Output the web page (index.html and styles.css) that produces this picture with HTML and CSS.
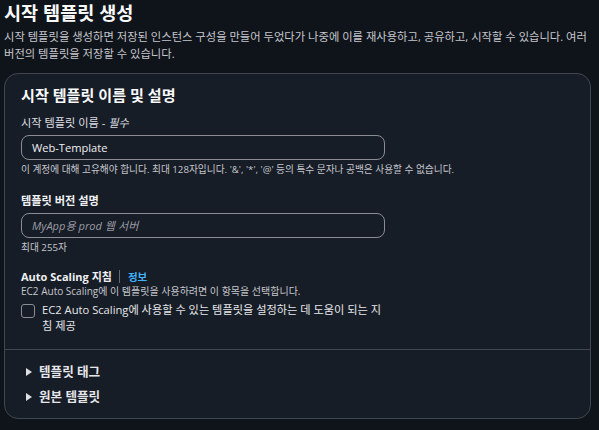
FILE: index.html
```html
<!DOCTYPE html>
<html lang="ko">
<head>
<meta charset="utf-8">
<link rel="stylesheet" href="styles.css">
</head>
<body>
<div class="page">
  <h1 class="title">시작 템플릿 생성</h1>
  <p class="desc">시작 템플릿을 생성하면 저장된 인스턴스 구성을 만들어 두었다가 나중에 이를 재사용하고, 공유하고, 시작할 수 있습니다. 여러 버전의 템플릿을 저장할 수 있습니다.</p>
  <div class="card">
    <div class="card-body">
      <h2 class="card-title">시작 템플릿 이름 및 설명</h2>
      <div class="field">
        <div class="label">시작 템플릿 이름 - <i>필수</i></div>
        <div class="input">Web-Template</div>
        <div class="hint">이 계정에 대해 고유해야 합니다. 최대 128자입니다. '&amp;', '*', '@' 등의 특수 문자나 공백은 사용할 수 없습니다.</div>
      </div>
      <div class="field second">
        <div class="label bold">템플릿 버전 설명</div>
        <div class="input placeholder">MyApp용 prod 웹 서버</div>
        <div class="hint">최대 255자</div>
      </div>
      <div class="field as">
        <div class="label bold tight">Auto Scaling 지침<span class="sep"></span><span class="info">정보</span></div>
        <div class="hint top">EC2 Auto Scaling에 이 템플릿을 사용하려면 이 항목을 선택합니다.</div>
        <label class="check">
          <span class="box"></span>
          <span class="check-text">EC2 Auto Scaling에 사용할 수 있는 템플릿을 설정하는 데 도움이 되는 지침 제공</span>
        </label>
      </div>
    </div>
    <div class="card-foot">
      <div class="expander"><span class="tri"></span>템플릿 태그</div>
      <div class="expander"><span class="tri"></span>원본 템플릿</div>
    </div>
  </div>
</div>
</body>
</html>
```

FILE: styles.css
```css
* { box-sizing: border-box; }
html, body { margin: 0; padding: 0; }
body {
  background: #0f141a;
  color: #dedee3;
  font-family: "Open Sans", "Noto Sans CJK KR", sans-serif;
  width: 599px;
  height: 430px;
  overflow: hidden;
}
.page { padding: 1px 8px 0 4px; }
.title {
  margin: 0;
  font-size: 18.6px;
  line-height: 24px;
  font-weight: 700;
  color: #f9f9fa;
}
.desc {
  margin: 3px 0 0;
  font-size: 11.3px;
  line-height: 17px;
  color: #c6c6cd;
}
.card {
  margin-top: 11px;
  background: #161d26;
  border: 1px solid #424650;
  border-radius: 14px;
  height: 346px;
}
.card-body {
  padding: 10px 17px 0 16px;
  height: 276px;
  border-bottom: 1px solid #424650;
}
.card-title {
  margin: 0;
  font-size: 15.1px;
  line-height: 22px;
  font-weight: 700;
  color: #f9f9fa;
}
.field { margin-top: 8px; }
.field.second { margin-top: 15px; }
.field.as { margin-top: 14px; }
.label {
  font-size: 11.2px;
  line-height: 17px;
  color: #dedee3;
}
.label.bold { font-weight: 700; color: #f0f0f3; }
.label.tight { line-height: 15px; font-size: 11px; }
.label i { font-style: italic; }
.input {
  margin-top: 4px;
  width: 364px;
  height: 25px;
  border: 1px solid #8c8c94;
  border-radius: 8px;
  padding: 0 10px;
  font-size: 11.1px;
  line-height: 23px;
  color: #f0f0f3;
}
.input.placeholder { font-style: italic; color: #9a9aa3; }
.hint {
  margin-top: 2px;
  font-size: 9.7px;
  line-height: 15px;
  color: #c6c6cd;
  white-space: nowrap;
}
.hint.top { margin-top: 0; line-height: 13px; font-size: 10px; }
.sep {
  display: inline-block;
  width: 1px;
  height: 13px;
  background: #5f6b7a;
  margin: 0 8px 0 7px;
  vertical-align: -2px;
}
.info { color: #42b4ff; font-size: 10.5px; }
.check {
  margin-top: 4px;
  display: flex;
  gap: 7px;
  align-items: flex-start;
  width: 363px;
}
.box {
  flex: none;
  width: 14px;
  height: 14px;
  border: 1.5px solid #8c8c94;
  border-radius: 3px;
  margin-top: 2px;
}
.check-text {
  font-size: 11.2px;
  line-height: 16px;
  color: #e6e6ea;
  word-break: break-all;
}
.card-foot { padding: 9px 0 0 20px; }
.expander {
  display: flex;
  align-items: center;
  font-size: 12.6px;
  line-height: 25px;
  font-weight: 700;
  color: #e6e6ea;
}
.tri {
  width: 0; height: 0;
  border-top: 4px solid transparent;
  border-bottom: 4px solid transparent;
  border-left: 6px solid #dedee3;
  margin-right: 7px;
  margin-left: 1px;
}
```
